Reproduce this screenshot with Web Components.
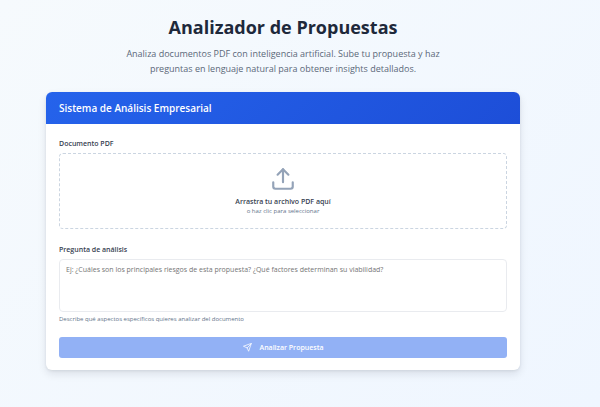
<!DOCTYPE html>
<html lang="es">
<head>
<meta charset="UTF-8">
<meta name="viewport" content="width=device-width, initial-scale=1.0">
<title>Analizador de Propuestas</title>
<style>
    body {
        margin: 0;
        min-height: 100vh;
        font-family: 'Segoe UI', 'Open Sans', 'Noto Sans', sans-serif;
        color: #1e293b;
        background: linear-gradient(135deg, #f6fafd, #eff6ff);
    }
</style>
</head>
<body>
<proposal-page>
    <page-intro slot="intro">
        <span slot="title">Analizador de Propuestas</span>
        Analiza documentos PDF con inteligencia artificial. Sube tu propuesta y haz preguntas en lenguaje natural para obtener insights detallados.
    </page-intro>
    <panel-card>
        <span slot="title">Sistema de Análisis Empresarial</span>
        <file-drop label="Documento PDF" accept="application/pdf">
            Arrastra tu archivo PDF aquí
            <span slot="hint">o haz clic para seleccionar</span>
        </file-drop>
        <question-field label="Pregunta de análisis" placeholder="Ej: ¿Cuáles son los principales riesgos de esta propuesta? ¿Qué factores determinan su viabilidad?">
            Describe qué aspectos específicos quieres analizar del documento
        </question-field>
        <submit-button disabled>Analizar Propuesta</submit-button>
    </panel-card>
</proposal-page>

<script>
class ProposalPage extends HTMLElement {
    constructor() {
        super();
        this.attachShadow({ mode: 'open' });
        this.shadowRoot.innerHTML = `
        <style>
            :host { display: block; padding: 12px 80px 36px 46px; }
            main { display: flex; flex-direction: column; gap: 16px; }
        </style>
        <main>
            <slot name="intro"></slot>
            <slot></slot>
        </main>
        `;
    }
}

class PageIntro extends HTMLElement {
    constructor() {
        super();
        this.attachShadow({ mode: 'open' });
        this.shadowRoot.innerHTML = `
        <style>
            :host { display: block; text-align: center; }
            h1 {
                margin: 0 0 4px;
                font-size: 18px;
                font-weight: 700;
                line-height: 30px;
            }
            p {
                max-width: 336px;
                margin: 0 auto;
                font-size: 9px;
                line-height: 15px;
                color: #5b6879;
            }
        </style>
        <h1><slot name="title"></slot></h1>
        <p><slot></slot></p>
        `;
    }
}

class PanelCard extends HTMLElement {
    constructor() {
        super();
        this.attachShadow({ mode: 'open' });
        this.shadowRoot.innerHTML = `
        <style>
            :host {
                display: block;
                overflow: hidden;
                border-radius: 6px;
                background: #fff;
                box-shadow: 0 4px 8px rgba(15, 23, 42, 0.1), 0 1px 3px rgba(15, 23, 42, 0.08);
            }
            header {
                padding: 8px 13px;
                background: linear-gradient(135deg, #2563eb, #1d4ed8);
                color: #fff;
            }
            h2 {
                margin: 0;
                font-size: 10px;
                font-weight: 600;
                line-height: 16px;
            }
            form {
                display: flex;
                flex-direction: column;
                gap: 13px;
                padding: 12px 13px;
            }
        </style>
        <header><h2><slot name="title"></slot></h2></header>
        <form><slot></slot></form>
        `;
    }
}

class FileDrop extends HTMLElement {
    constructor() {
        super();
        this.attachShadow({ mode: 'open' });
    }

    connectedCallback() {
        this.render();
    }

    render() {
        const label = this.getAttribute('label') || '';
        const accept = this.getAttribute('accept') || '';

        this.shadowRoot.innerHTML = `
        <style>
            :host { display: block; position: relative; }
            .label {
                display: block;
                margin-bottom: 2px;
                font-size: 7px;
                font-weight: 600;
                line-height: 15px;
                color: #374151;
            }
            input {
                position: absolute;
                width: 1px;
                height: 1px;
                opacity: 0;
            }
            .zone {
                display: flex;
                flex-direction: column;
                align-items: center;
                padding: 12px;
                border: 1px dashed #cbd5e1;
                border-radius: 4px;
                font-size: 7px;
                font-weight: 600;
                line-height: 10px;
                color: #374151;
                cursor: pointer;
            }
            .zone:hover { border-color: #2563eb; }
            input:focus-visible + .zone { outline: 2px solid #93c5fd; }
            svg { width: 26px; height: 26px; margin-bottom: 5px; color: #94a3b8; }
            .hint { font-size: 6px; font-weight: 400; line-height: 9px; color: #64748b; }
        </style>
        <label class="label" for="file">${label}</label>
        <input id="file" type="file" accept="${accept}">
        <label class="zone" for="file">
            <svg viewBox="0 0 24 24" fill="none" stroke="currentColor" stroke-width="2" stroke-linecap="round" stroke-linejoin="round" aria-hidden="true">
                <path d="M21 15v4a2 2 0 0 1-2 2H5a2 2 0 0 1-2-2v-4"/>
                <path d="M17 8l-5-5-5 5"/>
                <path d="M12 3v12"/>
            </svg>
            <span><slot></slot></span>
            <span class="hint"><slot name="hint"></slot></span>
        </label>
        `;
    }
}

class QuestionField extends HTMLElement {
    constructor() {
        super();
        this.attachShadow({ mode: 'open' });
    }

    connectedCallback() {
        this.render();
    }

    render() {
        const label = this.getAttribute('label') || '';
        const placeholder = this.getAttribute('placeholder') || '';

        this.shadowRoot.innerHTML = `
        <style>
            :host { display: block; }
            label {
                display: block;
                margin-bottom: 2px;
                font-size: 7px;
                font-weight: 600;
                line-height: 15px;
                color: #374151;
            }
            textarea {
                display: block;
                box-sizing: border-box;
                width: 100%;
                height: 53px;
                padding: 4px 6px;
                border: 1px solid #e9ebef;
                border-radius: 4px;
                background: #fff;
                font-family: inherit;
                font-size: 7px;
                line-height: 12px;
                color: #1e293b;
                resize: none;
            }
            textarea::placeholder { color: #757575; opacity: 1; }
            textarea:focus { outline: none; border-color: #2563eb; }
            p {
                margin: 3px 0 0;
                font-size: 6px;
                line-height: 9px;
                color: #64748b;
            }
        </style>
        <label for="question">${label}</label>
        <textarea id="question" placeholder="${placeholder}"></textarea>
        <p><slot></slot></p>
        `;
    }
}

class SubmitButton extends HTMLElement {
    constructor() {
        super();
        this.attachShadow({ mode: 'open' });
    }

    static get observedAttributes() {
        return ['disabled'];
    }

    connectedCallback() {
        this.render();
    }

    attributeChangedCallback() {
        this.render();
    }

    render() {
        const isDisabled = this.hasAttribute('disabled');

        this.shadowRoot.innerHTML = `
        <style>
            :host { display: block; }
            button {
                display: flex;
                align-items: center;
                justify-content: center;
                gap: 8px;
                width: 100%;
                padding: 5px 12px;
                border: none;
                border-radius: 3px;
                background: #2563eb;
                color: #fff;
                font-family: inherit;
                font-size: 7px;
                font-weight: 600;
                line-height: 11px;
                cursor: pointer;
            }
            button:disabled { background: #92b1f5; cursor: not-allowed; }
            svg { width: 9px; height: 9px; }
        </style>
        <button type="submit" ${isDisabled ? 'disabled' : ''}>
            <svg viewBox="0 0 24 24" fill="none" stroke="currentColor" stroke-width="2" stroke-linecap="round" stroke-linejoin="round" aria-hidden="true">
                <path d="M22 2L11 13"/>
                <path d="M22 2l-7 20-4-9-9-4z"/>
            </svg>
            <span><slot></slot></span>
        </button>
        `;
    }
}

customElements.define('proposal-page', ProposalPage);
customElements.define('page-intro', PageIntro);
customElements.define('panel-card', PanelCard);
customElements.define('file-drop', FileDrop);
customElements.define('question-field', QuestionField);
customElements.define('submit-button', SubmitButton);
</script>
</body>
</html>
